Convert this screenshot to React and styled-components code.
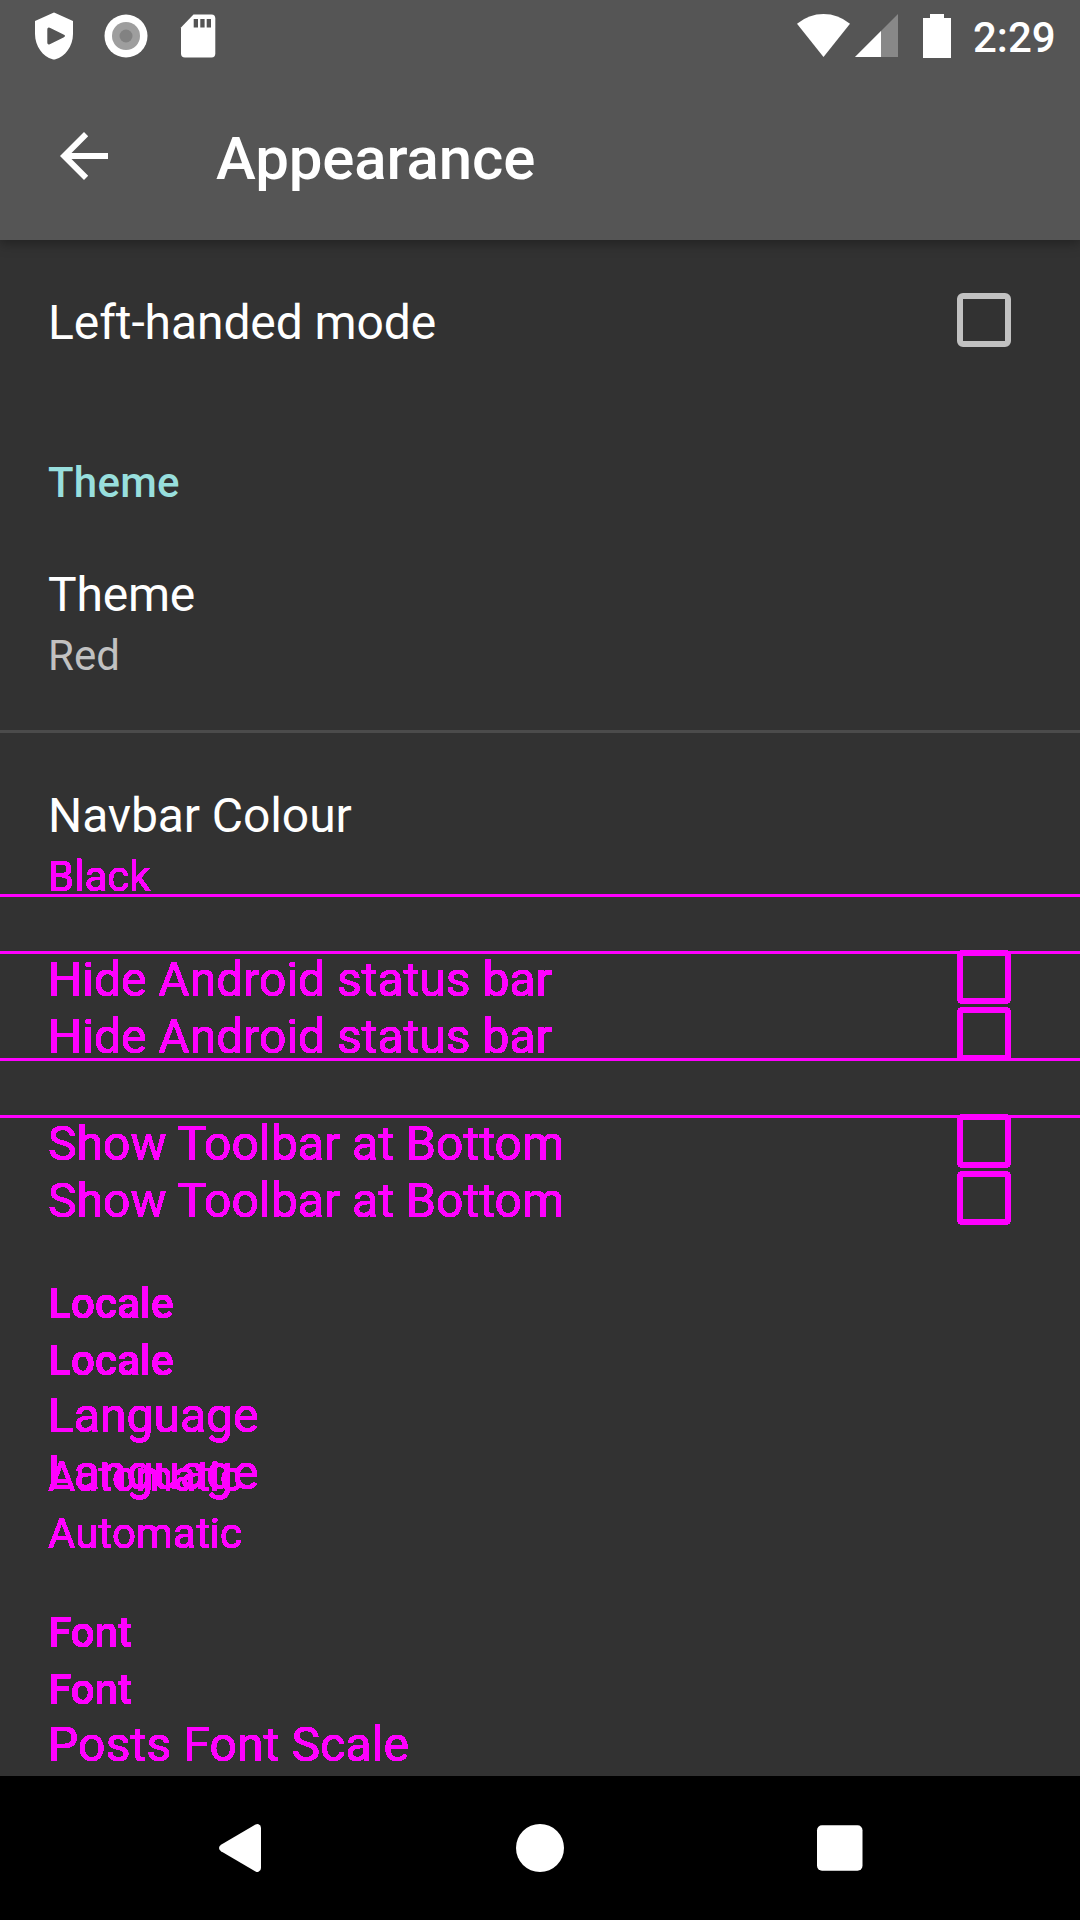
import React from "react";
import styled, { createGlobalStyle } from "styled-components";

const MAGENTA = "#ff00ff";

const GlobalStyle = createGlobalStyle`
  body {
    margin: 0;
    background: #323232;
    font-family: Roboto, "Noto Sans", sans-serif;
  }
`;

const Screen = styled.div`
  width: 1080px;
  height: 1920px;
  display: flex;
  flex-direction: column;
  overflow: hidden;
  background: #323232;
  color: #fff;
`;

const Header = styled.header`
  flex: none;
  height: 240px;
  display: flex;
  flex-direction: column;
  background: #555;
  box-shadow: 0 3px 12px rgba(0, 0, 0, 0.36);
`;

const StatusBar = styled.div`
  height: 72px;
  display: flex;
  justify-content: space-between;
`;

const StatusGroup = styled.div`
  display: flex;
  align-items: flex-start;
`;

const Clock = styled.time`
  width: 107px;
  padding: 13px 0 0 1px;
  font-size: 42px;
  line-height: 49px;
  font-weight: 500;
`;

const Toolbar = styled.div`
  height: 168px;
  display: flex;
  align-items: center;
`;

const BackButton = styled.button`
  width: 168px;
  height: 168px;
  padding: 0;
  border: 0;
  background: none;
`;

const ToolbarTitle = styled.h1`
  margin: 0 0 0 48px;
  padding-top: 5px;
  font-size: 60px;
  line-height: 71px;
  font-weight: 500;
  letter-spacing: -0.12px;
`;

const List = styled.main`
  flex: 1;
  min-height: 0;
  display: flex;
  flex-direction: column;
  padding-top: 54px;
  overflow: hidden;
`;

const Section = styled.section`
  display: flex;
  flex-direction: column;
  gap: ${(p) => p.$gap || 0}px;
  margin-top: ${(p) => p.$top || 0}px;
  padding-left: 48px;
  color: ${(p) => (p.$trail ? MAGENTA : "#fff")};
  filter: ${(p) => (p.$trail ? "url(#hard-edge)" : "none")};
`;

const Title = styled.div`
  font-size: 48px;
  line-height: 57px;
  letter-spacing: ${(p) => p.$track || 0}px;
  white-space: nowrap;
`;

const Summary = styled.div`
  font-size: 42px;
  line-height: 49px;
  letter-spacing: ${(p) => p.$track || 0}px;
  color: ${(p) => (p.$trail ? "inherit" : "#c1c1c1")};
`;

const Category = styled.h2`
  margin: 0;
  font-size: 42px;
  line-height: 49px;
  font-weight: 500;
  letter-spacing: ${(p) => p.$track || 0}px;
  color: ${(p) => (p.$trail ? "inherit" : "#98dfdd")};
`;

const Divider = styled.hr`
  flex: none;
  width: 100%;
  height: 3px;
  margin: ${(p) => p.$top}px 0 -3px;
  border: 0;
  background: ${(p) => (p.$trail ? MAGENTA : "#4b4b4b")};
`;

const Row = styled.div`
  height: 57px;
  display: flex;
  align-items: flex-start;
  justify-content: space-between;
  padding-right: 69px;
`;

const CheckBox = styled.span`
  box-sizing: border-box;
  width: 54px;
  height: 54px;
  margin-top: -1px;
  border: 6px solid ${(p) => (p.$trail ? MAGENTA : "#c1c1c1")};
  border-radius: 6px;
`;

const NavBar = styled.nav`
  flex: none;
  height: 144px;
  background: #000;
`;

function CheckRow({ label, trail, track }) {
  return (
    <Row>
      <Title $track={track}>{label}</Title>
      <CheckBox $trail={trail} />
    </Row>
  );
}

export default function App() {
  return (
    <>
      <GlobalStyle />
      <svg width="0" height="0" style={{ position: "absolute" }}>
        <filter id="hard-edge" x="-2%" y="-10%" width="104%" height="120%" colorInterpolationFilters="sRGB">
          <feComponentTransfer>
            <feFuncA type="linear" slope="100" intercept="-1" />
          </feComponentTransfer>
        </filter>
      </svg>
      <Screen>
        <Header>
          <StatusBar>
            <StatusGroup>
              <svg width="240" height="72" viewBox="0 0 240 72">
                <path fill="#fff" fillRule="evenodd" d="M52.800 12.900Q54 12.200 55.200 12.900L73 21V34C73 46 65 57 55.500 59.300Q54 59.800 52.500 59.300C43 57 35 46 35 34V21ZM47.300 29.500V42.500Q47.300 45.300 49.800 44.300L64 37.200Q66 36 64 34.800L49.800 27.700Q47.300 26.700 47.300 29.500Z" />
                <circle cx="126" cy="36" r="21.500" fill="#fff" />
                <circle cx="126" cy="36" r="14" fill="#9e9e9e" />
                <circle cx="126" cy="36" r="6.500" fill="#828282" />
                <path fill="#fff" d="M193.500 14.500H211.500Q215.300 14.500 215.300 18.500V53.500Q215.300 57.500 211.500 57.500H185Q181 57.500 181 53.500V27.500Z" />
                <path fill="#555" d="M193.700 19h4.300v8.500h-4.300zM200.300 19h4.300v8.500h-4.300zM206.700 19h4.300v8.500h-4.300z" />
              </svg>
            </StatusGroup>
            <StatusGroup>
              <svg width="180" height="72" viewBox="792 0 180 72">
                <path fill="#fff" d="M797 23.700Q809 14 823.500 14T850 23.700L823.500 57Z" />
                <path fill="#888" d="M898 14V57H855Z" />
                <path fill="#fff" d="M881 31V57H855Z" />
                <path fill="#fff" d="M930 14H944V18H951V58H923V18H930Z" />
              </svg>
              <Clock>2:29</Clock>
            </StatusGroup>
          </StatusBar>
          <Toolbar>
            <BackButton aria-label="Back">
              <svg width="168" height="168" viewBox="0 72 168 168">
                <path fill="#fff" d="M108 153H71.500L88.200 136.200 84 132 60 156 84 180 88.200 175.800 71.500 159H108Z" />
              </svg>
            </BackButton>
            <ToolbarTitle>Appearance</ToolbarTitle>
          </Toolbar>
        </Header>

        <List>
          <Section>
            <CheckRow label="Left-handed mode" track={-0.08} />
          </Section>
          <Section $top={107}>
            <Category $track={0.25}>Theme</Category>
          </Section>
          <Section $top={59} $gap={8}>
            <Title $track={-0.2}>Theme</Title>
            <Summary>Red</Summary>
          </Section>
          <Divider $top={50} />
          <Section $top={57}>
            <Title $track={-0.09}>Navbar Colour</Title>
          </Section>
          <Section $trail $top={8}>
            <Summary $trail>Black</Summary>
          </Section>
          <Divider $trail $top={-7} />
          <Divider $trail $top={57} />
          <Section $trail>
            <CheckRow trail label="Hide Android status bar" />
            <CheckRow trail label="Hide Android status bar" />
          </Section>
          <Divider $trail $top={-7} />
          <Divider $trail $top={57} />
          <Section $trail>
            <CheckRow trail label="Show Toolbar at Bottom" track={0.06} />
            <CheckRow trail label="Show Toolbar at Bottom" track={0.06} />
          </Section>
          <Section $trail $top={50} $gap={8}>
            <Category $trail $track={0.25}>Locale</Category>
            <Category $trail $track={0.25}>Locale</Category>
          </Section>
          <Section $trail $top={2}>
            <Title>Language</Title>
            <Title>Language</Title>
          </Section>
          <Section $trail $top={-49} $gap={8}>
            <Summary $trail $track={0.1}>Automatic</Summary>
            <Summary $trail $track={0.1}>Automatic</Summary>
          </Section>
          <Section $trail $top={50} $gap={8}>
            <Category $trail>Font</Category>
            <Category $trail>Font</Category>
          </Section>
          <Section $trail $top={2}>
            <Title $track={0.14}>Posts Font Scale</Title>
          </Section>
        </List>

        <NavBar>
          <svg width="1080" height="144" viewBox="0 1776 1080 144">
            <path fill="#fff" d="M255.500 1824.600Q257 1823.800 258.500 1824.200Q261 1825 261 1828V1868Q261 1871 258.500 1871.800Q257 1872.200 255.500 1871.400L221 1851.200Q219 1850 219 1848T221 1844.800Z" />
            <circle cx="540" cy="1848" r="24" fill="#fff" />
            <rect x="817" y="1825.300" width="45.500" height="45.500" rx="5" fill="#fff" />
          </svg>
        </NavBar>
      </Screen>
    </>
  );
}
